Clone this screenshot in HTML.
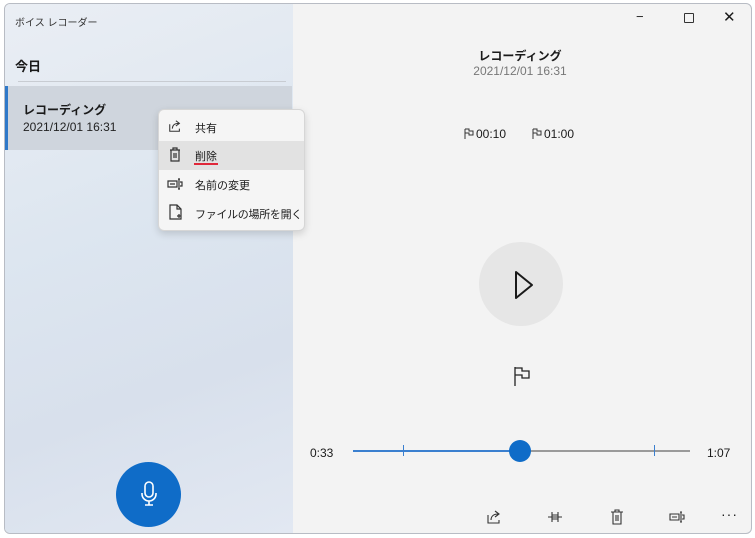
<!DOCTYPE html><html><head><meta charset="utf-8"><style>
*{margin:0;padding:0;box-sizing:border-box}
body{width:755px;height:538px;background:#fff;position:relative;overflow:hidden;font-family:"Liberation Sans","Noto Sans CJK JP",sans-serif;color:#1a1a1a}
.win{position:absolute;left:4px;top:3px;width:748px;height:531px;background:#f3f3f3;border:1px solid #b8bcc4;border-radius:6px;overflow:hidden}
.left{position:absolute;left:0;top:0;width:288px;height:531px;background:linear-gradient(160deg,#eaeef4 0%,#dde6f0 40%,#d8e0ec 70%,#e2e8f2 100%)}
.t{position:absolute;white-space:nowrap}
svg{position:absolute}
</style></head><body>
<div class="win">
<div class="left">
<div class="t" style="left:10px;top:10px;font-size:10px;color:#333">ボイス レコーダー</div>
<div class="t" style="left:10px;top:52px;font-size:13px;font-weight:bold">今日</div>
<div style="position:absolute;left:13px;top:77px;width:268px;height:1px;background:#c8ccd2"></div>
<div style="position:absolute;left:0;top:82px;width:287px;height:64px;background:#cfd5dd"></div>
<div style="position:absolute;left:0;top:82px;width:3px;height:64px;background:#2f79c9"></div>
<div class="t" style="left:18px;top:97px;font-size:12px;font-weight:bold">レコーディング</div>
<div class="t" style="left:18px;top:116px;font-size:12px;color:#222">2021/12/01 16:31</div>
<div style="position:absolute;left:111px;top:458px;width:65px;height:65px;border-radius:50%;background:#0f6cc8"></div>
<svg style="left:135px;top:477px" width="18" height="26" viewBox="0 0 18 26"><rect x="5" y="1" width="8" height="15" rx="4" fill="none" stroke="#fff" stroke-width="1.6"/><path d="M2 12v1a7 7 0 0 0 14 0v-1M9 20v4M5 24h8" fill="none" stroke="#fff" stroke-width="1.6"/></svg>
</div>
<div class="t" style="left:631px;top:5px;font-size:13px">−</div>
<div style="position:absolute;left:679px;top:9px;width:10px;height:10px;border:1.3px solid #333;border-radius:1px"></div>
<div class="t" style="left:718px;top:4px;font-size:15px">✕</div>
<div class="t" style="left:465px;top:43px;width:100px;text-align:center;font-size:12px;font-weight:bold">レコーディング</div>
<div class="t" style="left:465px;top:60px;width:100px;text-align:center;font-size:12px;color:#777">2021/12/01 16:31</div>
<svg style="left:459px;top:124px" width="10" height="12" viewBox="0 0 10 12"><path d="M1 1v10M1 1h4v2h4v4H5V5H1" fill="none" stroke="#333" stroke-width="1"/></svg>
<div class="t" style="left:471px;top:123px;font-size:12px">00:10</div>
<svg style="left:527px;top:124px" width="10" height="12" viewBox="0 0 10 12"><path d="M1 1v10M1 1h4v2h4v4H5V5H1" fill="none" stroke="#333" stroke-width="1"/></svg>
<div class="t" style="left:539px;top:123px;font-size:12px">01:00</div>
<div style="position:absolute;left:474px;top:238px;width:84px;height:84px;border-radius:50%;background:#e6e6e6"></div>
<svg style="left:508px;top:266px" width="22" height="30" viewBox="0 0 22 30"><path d="M3 2L19 15 3 28Z" fill="none" stroke="#1a1a1a" stroke-width="2" stroke-linejoin="round"/></svg>
<svg style="left:508px;top:362px" width="18" height="22" viewBox="0 0 18 22"><path d="M2 1v19M2 2h7v3h7v7H9V9H2" fill="none" stroke="#222" stroke-width="1.3"/></svg>
<div class="t" style="left:305px;top:442px;font-size:12px">0:33</div>
<div class="t" style="left:702px;top:442px;font-size:12px">1:07</div>
<div style="position:absolute;left:348px;top:446px;width:167px;height:2px;background:#3a7fcf"></div>
<div style="position:absolute;left:515px;top:446px;width:170px;height:2px;background:#9a9a9a"></div>
<div style="position:absolute;left:398px;top:441px;width:1px;height:11px;background:#3a7fcf"></div>
<div style="position:absolute;left:649px;top:441px;width:1px;height:11px;background:#3a7fcf"></div>
<div style="position:absolute;left:504px;top:436px;width:22px;height:22px;border-radius:50%;background:#0f6cc8"></div>
<svg style="left:481px;top:505px" width="16" height="16" viewBox="0 0 16 16"><path d="M2 6v8h11v-3M5 11c0-4 3-6 7-6M9 2l4 3-4 3" fill="none" stroke="#333" stroke-width="1.1"/></svg>
<svg style="left:542px;top:506px" width="16" height="14" viewBox="0 0 16 14"><path d="M1 7h14M5 2v10M11 2v10M5 5h6v4H5" fill="none" stroke="#333" stroke-width="1.1"/></svg>
<svg style="left:605px;top:505px" width="14" height="16" viewBox="0 0 14 16"><path d="M1 3h12M5 3V1h4v2M3 3v12h8V3M6 6v6M8 6v6" fill="none" stroke="#333" stroke-width="1.1"/></svg>
<svg style="left:664px;top:507px" width="16" height="12" viewBox="0 0 16 12"><path d="M1 3h9v6H1zM3 6h5M12 1v10M11 1h2M11 11h2M13 4h2v4h-2" fill="none" stroke="#333" stroke-width="1.1"/></svg>
<div class="t" style="left:716px;top:502px;font-size:14px;letter-spacing:1px">···</div>
</div>
<div style="position:absolute;left:158px;top:109px;width:147px;height:122px;background:#f5f5f5;border:1px solid #d6d6d6;border-radius:6px;box-shadow:0 3px 8px rgba(0,0,0,.15)">
<div style="position:absolute;left:0;top:31px;width:145px;height:29px;background:#e2e2e2"></div>
<svg style="left:9px;top:9px" width="14" height="14" viewBox="0 0 16 16"><path d="M2 6v8h11v-3M5 11c0-4 3-6 7-6M9 2l4 3-4 3" fill="none" stroke="#333" stroke-width="1.2"/></svg>
<div class="t" style="left:36px;top:10px;font-size:11px">共有</div>
<svg style="left:10px;top:37px" width="12" height="15" viewBox="0 0 12 15"><path d="M1 3h10M4 3V1h4v2M2 3v11h8V3M5 6v5M7 6v5" fill="none" stroke="#333" stroke-width="1.2"/></svg>
<div class="t" style="left:36px;top:38px;font-size:11px">削除</div>
<div style="position:absolute;left:35px;top:53px;width:24px;height:2px;background:#e0283a"></div>
<svg style="left:8px;top:68px" width="16" height="12" viewBox="0 0 16 12"><path d="M1 3h9v6H1zM3 6h5M12 1v10M11 1h2M11 11h2M13 4h2v4h-2" fill="none" stroke="#333" stroke-width="1.2"/></svg>
<div class="t" style="left:36px;top:67px;font-size:11px">名前の変更</div>
<svg style="left:10px;top:94px" width="13" height="16" viewBox="0 0 13 16"><path d="M1 1h7l4 4v10H1zM8 1v4h4M8 12h4M10 10v4" fill="none" stroke="#333" stroke-width="1.2"/></svg>
<div class="t" style="left:36px;top:96px;font-size:11px;letter-spacing:-0.3px">ファイルの場所を開く</div>
</div>
</body></html>
